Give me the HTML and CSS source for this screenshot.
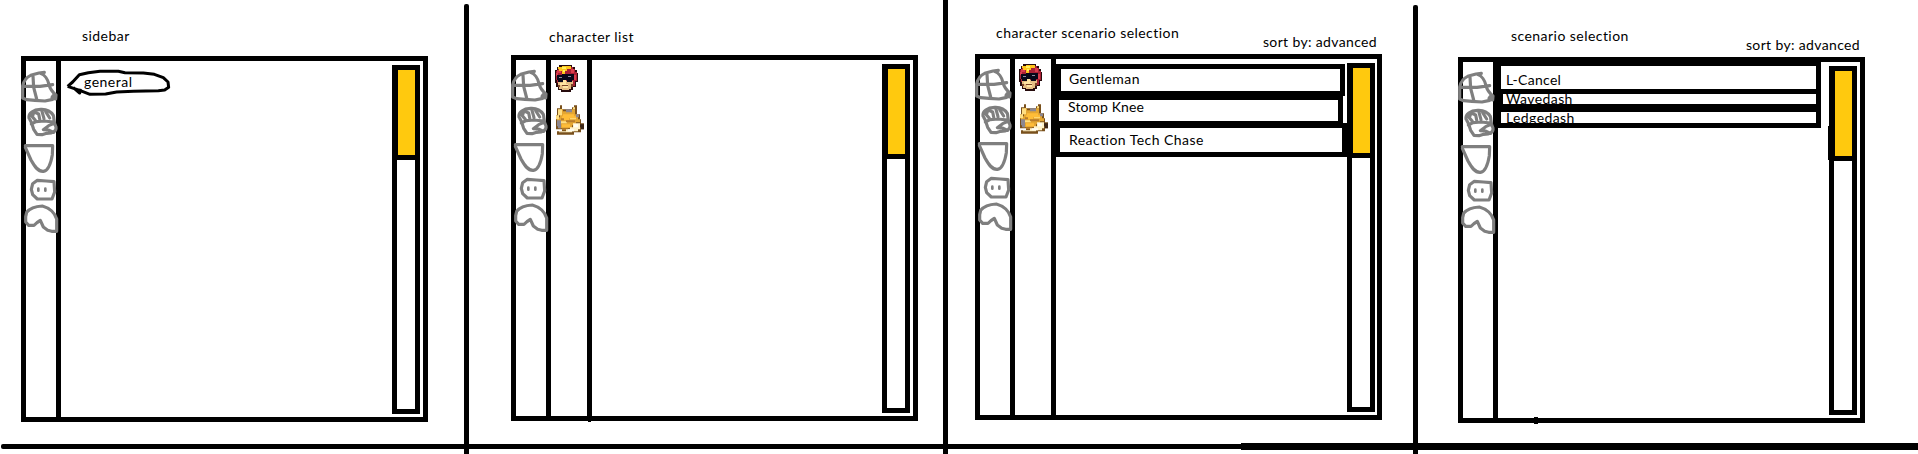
FILE: index.html
```html
<!DOCTYPE html>
<html lang="en">
<head>
<meta charset="utf-8">
<title>Scenario browser wireframes</title>
<link rel="stylesheet" href="styles.css">
</head>
<body>
<svg class="defs" aria-hidden="true">
  <symbol id="categories" viewBox="63 195 120 510">
    <g fill="none" stroke="#7f7f7f" stroke-width="9.5" stroke-linecap="round" stroke-linejoin="round">
      <path d="M133 217L117 219L92 226C78 232 71 243 68 258V294L80 299L105 301L135 303L158 298M121 220C134 224 144 239 147 254C150 267 158 277 168 285L167 297L156 292L160 286M70 259L120 259L158 254M99 228L101 262L110 297"/>
      <path d="M87 354C85 339 100 329 122 328C140 327 153 335 160 346C163 357 160 367 168 381C170 393 160 400 140 400L126 404L111 403L101 388L94 367L87 354M101 338L97 350L106 361M105 337L116 342L119 357M126 334L132 356M137 335L149 354M94 372L108 365L132 363L160 366M162 370L146 377L130 389L145 390L161 397"/>
      <path d="M76 437H158L157 464C153 488 144 512 130 514C114 515 104 500 93 480L76 442"/>
      <path d="M98 551L112 541L139 543L162 545L164 576L156 597L112 597L98 584L94 568Z"/>
      <path stroke-width="8" d="M115 566V572M136 566V572"/>
      <path d="M80 637L77 650V666L86 676H102L111 668L121 661L130 681L143 691L155 694H170V657C165 641 150 624 127 618C105 619 90 624 80 637"/>
    </g>
  </symbol>
  <symbol id="fighters" viewBox="579 189 96 219">
    <path fill="#260b0d" d="M597 195H636V201H645V210H651V219H654V246H648V261H639V270H633V276H603V270H594V261H588V249H585V210H591V201H597Z"/>
    <path fill="#a91f35" d="M597 201H639V207H645V216H651V243H645V258H633V249H591V240H588V213H594V207H597Z"/>
    <path fill="#d93d4d" d="M591 210H603V219H591ZM633 207H642V219H633ZM588 219H594V228H588ZM642 225H648V240H642Z"/>
    <path fill="#ffc51b" d="M594 201H606V198H633V207H621V213H615V222H606V213H597V207H594Z"/>
    <path fill="#fff05e" d="M606 201H618V207H606ZM609 210H615V216H609Z"/>
    <path fill="#e5bd83" d="M594 243H639V258H633V267H627V270H606V267H597V258H594Z"/>
    <path fill="#ffe5a3" d="M609 240H618V252H624V264H609V255H600V249H609Z"/>
    <path fill="#080719" d="M591 225H606V222H642V240H636V246H621V240H609V246H594V240H591Z"/>
    <path fill="#8d8ba0" d="M597 231H606V234H597ZM624 228H633V231H624Z"/>
    <path fill="#7b4428" d="M606 255H624V258H606ZM594 255H600V261H594ZM633 252H639V261H633Z"/>
    <path fill="#79501c" d="M600 316H606V328H636V322H642V316H651V343H660V358H663V370H672V388H663V397H642V404H591V394H606V388H588V346H591V325H600Z"/>
    <path fill="#e4a632" d="M600 322V328H609V334H636V328H645V343H654V358H660V367H648V376H636V385H597V376H591V352H600Z"/>
    <path fill="#ffdf83" d="M594 328H606V346H597V358H588V346H594ZM639 322H645V328H639ZM603 364H621V370H603ZM630 352H648V358H630Z"/>
    <path fill="#ffbd38" d="M609 343H642V349H648V355H627V361H606V349H609ZM606 373H630V382H606Z"/>
    <path fill="#8c8790" d="M618 328H636V337H618ZM591 361H603V385H594V379H591ZM648 343H657V352H648Z"/>
    <path fill="#b77c2b" d="M603 355H612V361H603ZM618 361H645V367H618ZM606 385H624V391H606Z"/>
    <path fill="#fff2c8" d="M639 370H660V388H654V394H636V397H597V394H618V388H630V382H639Z"/>
    <path fill="#fffdf2" d="M642 373H654V382H642ZM624 388H642V394H624Z"/>
    <path fill="#3b2618" d="M660 373H672V388H663V382H660Z"/>
  </symbol>
</svg>

<main class="board">
  <section class="panel panel-sidebar">
    <header class="head"><h2 class="title">sidebar</h2></header>
    <div class="frame">
      <nav class="rail"><svg class="categories"><use href="#categories"/></svg></nav>
      <div class="content">
        <div class="bubble">
          <svg class="bubble-shape" viewBox="198 207 315 84" fill="none" stroke="#000" stroke-width="9" stroke-linejoin="round"><path d="M203 259L218 246L238 224L265 218L300 214H355L375 218L430 219L463 223L490 233L504 246L506 262L494 270L475 272L400 274L350 276L317 282L270 283L241 272L203 259M220 263L239 279L241 266"/></svg>
          <span class="bubble-text">general</span>
        </div>
      </div>
      <div class="scroll"><div class="thumb"></div></div>
    </div>
  </section>
  <div class="divider divider-first"></div>
  <section class="panel panel-characters">
    <header class="head"><h2 class="title">character list</h2></header>
    <div class="frame">
      <nav class="rail"><svg class="categories"><use href="#categories"/></svg></nav>
      <nav class="rail rail-fighters"><svg class="fighters"><use href="#fighters"/></svg></nav>
      <div class="content"></div>
      <div class="scroll"><div class="thumb"></div></div>
    </div>
  </section>
  <div class="divider"></div>
  <section class="panel panel-character-scenarios">
    <header class="head"><h2 class="title">character scenario selection</h2><span class="sort">sort by: advanced</span></header>
    <div class="frame">
      <nav class="rail"><svg class="categories"><use href="#categories"/></svg></nav>
      <nav class="rail rail-fighters"><svg class="fighters"><use href="#fighters"/></svg></nav>
      <ul class="content list">
        <li class="row gentleman"><span>Gentleman</span></li>
        <li class="row stomp"><span>Stomp Knee</span></li>
        <li class="row reaction"><span>Reaction Tech Chase</span></li>
      </ul>
      <div class="scroll"><div class="thumb"></div></div>
    </div>
  </section>
  <div class="divider divider-last"></div>
  <section class="panel panel-scenarios">
    <header class="head"><h2 class="title">scenario selection</h2><span class="sort">sort by: advanced</span></header>
    <div class="frame">
      <nav class="rail"><svg class="categories"><use href="#categories"/></svg></nav>
      <ul class="content">
        <li class="row cancel"><span>L-Cancel</span></li>
        <li class="row wavedash"><span>Wavedash</span></li>
        <li class="row ledgedash"><span>Ledgedash</span></li>
      </ul>
      <div class="scroll"><div class="thumb"></div></div>
    </div>
  </section>
  <div class="baseline"></div>
  <div class="baseline baseline-thick"></div>
</main>
</body>
</html>
```
FILE: styles.css
```css
* { box-sizing: border-box; }
body {
  margin: 0;
  background: #fff;
  color: #000;
  font: 14px/20px Lato, "Open Sans", sans-serif;
  letter-spacing: 0.4px;
}
.defs { position: absolute; width: 0; height: 0; }
.board {
  position: relative;
  display: flex;
  width: 1918px;
  height: 454px;
  overflow: hidden;
}

/* Panels */
.panel { flex: none; }
.panel-sidebar { width: 464px; padding-left: 21px; }
.panel-characters { width: 474px; padding-left: 42px; }
.panel-character-scenarios { width: 465px; padding-left: 27px; }
.panel-scenarios { width: 500px; padding-left: 40px; }
.divider { flex: none; width: 5px; background: #000; }
.divider-first { margin-top: 4px; border-radius: 2px 2px 0 0; }
.divider-last { margin-top: 5px; border-radius: 2px 2px 0 0; }

.head {
  display: flex;
  justify-content: space-between;
  align-items: flex-start;
  width: 407px;
  white-space: nowrap;
}
.title { margin: 0; font-size: 14px; font-weight: 400; letter-spacing: 0.45px; }
.panel-sidebar .head { height: 56px; padding: 26px 0 0 61px; }
.panel-characters .head { height: 55px; padding: 27px 0 0 38px; }
.panel-character-scenarios .head { height: 54px; padding: 23px 5px 0 21px; }
.panel-scenarios .head { height: 57px; padding: 26px 5px 0 53px; }
.sort { margin-top: 9px; letter-spacing: 0.35px; }

/* Window frame */
.frame {
  position: relative;
  display: flex;
  width: 407px;
  height: 366px;
  border: 5px solid #000;
}
.panel-characters .frame::after,
.panel-scenarios .frame::after {
  content: "";
  position: absolute;
  background: #000;
}
.panel-characters .frame::after { left: 72px; top: 360px; width: 3px; height: 2px; }
.panel-scenarios .frame::after { left: 71px; top: 355px; width: 4px; height: 7px; }
.rail {
  flex: none;
  width: 35px;
  border-right: 5px solid #000;
}
.rail-fighters { width: 41px; }
.categories {
  display: block;
  width: 40px;
  height: 170px;
  margin: 4px 0 0 -5px;
}
.fighters {
  display: block;
  width: 32px;
  height: 73px;
  margin: 3px 0 0 2px;
}
.content { flex: 1; margin: 0; padding: 0; list-style: none; }
.list { padding-top: 5px; }

.bubble { display: grid; width: 105px; margin: 8px 0 0 5px; }
.bubble-shape, .bubble-text { grid-area: 1 / 1; }
.bubble-shape { width: 105px; height: 28px; }
.bubble-text { padding: 3px 0 0 18px; letter-spacing: 0.5px; }

/* Scrollbar */
.scroll {
  position: relative;
  flex: none;
  width: 28px;
  height: 349px;
  margin: 4px 3px 0 0;
  border: 5px solid #000;
}
.thumb {
  height: 90px;
  background: #ffc90e;
  border: solid #000;
  border-width: 0 0 5px 1px;
}
.panel-scenarios .scroll::before {
  content: "";
  position: absolute;
  left: -6px;
  top: 55px;
  width: 1px;
  height: 34px;
  background: #000;
}

/* Scenario rows */
.row {
  overflow: hidden;
  border: solid #000;
  white-space: nowrap;
}
.row span { display: block; }
.gentleman { width: 289px; height: 32px; border-width: 5px; padding: 0 0 0 8px; }
.stomp { width: 287px; height: 27px; border-width: 4px 5px 2px 3px; padding-left: 9px; letter-spacing: 0.1px; }
.stomp span { margin-top: -3px; }
.reaction { width: 291px; height: 34px; border-width: 5px 5px 5px 4px; padding: 2px 0 0 9px; letter-spacing: 0.45px; }
.cancel { width: 323px; height: 32px; border-width: 4px 5px 5px 3px; padding: 4px 0 0 5px; letter-spacing: 0.3px; }
.wavedash { width: 323px; height: 18px; border-width: 0 5px 8px 5px; padding-left: 3px; }
.ledgedash { width: 323px; height: 16px; border-width: 0 5px 5px 3px; padding-left: 5px; }
.wavedash span { margin-top: -5px; }
.ledgedash span { margin-top: -4px; }

/* Bottom rule */
.baseline {
  position: absolute;
  left: 1px;
  top: 444px;
  width: 1240px;
  height: 5px;
  border-radius: 2px 0 0 2px;
  background: #000;
}
.baseline-thick { left: 1241px; top: 443px; width: 677px; height: 7px; border-radius: 0; }
```
